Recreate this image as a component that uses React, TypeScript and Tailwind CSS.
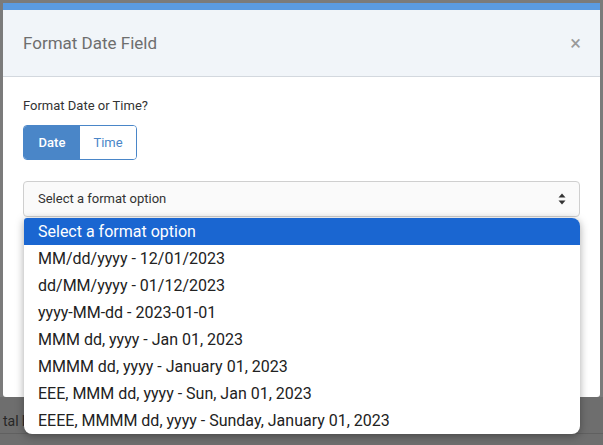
import React from 'react';

const options = [
  'Select a format option',
  'MM/dd/yyyy - 12/01/2023',
  'dd/MM/yyyy - 01/12/2023',
  'yyyy-MM-dd - 2023-01-01',
  'MMM dd, yyyy - Jan 01, 2023',
  'MMMM dd, yyyy - January 01, 2023',
  'EEE, MMM dd, yyyy - Sun, Jan 01, 2023',
  'EEEE, MMMM dd, yyyy - Sunday, January 01, 2023',
];

const SortIcon = () => (
  <svg width="8" height="12" viewBox="0 0 8 12" className="text-[#333]">
    <path d="M4 0.5 L7.5 4.5 H0.5 Z" fill="currentColor" />
    <path d="M4 11.5 L7.5 7.5 H0.5 Z" fill="currentColor" />
  </svg>
);

export default function App() {
  return (
    <div className="relative h-[445px] w-[603px] overflow-hidden bg-[#7b7b7b] font-['Roboto',sans-serif]">
      <div className="mx-[3px] mt-[3px] h-[394px] overflow-hidden rounded-b-[3px] bg-white">
        <div className="h-[7px] bg-[#5b9be1]" />
        <div className="flex h-[67px] items-center justify-between border-b border-[#d3d8de] bg-[#f1f5f9] pl-[20px] pr-[19px]">
          <h2 className="pt-[1px] text-[17px] text-[#6e6e6e]">Format Date Field</h2>
          <span className="text-[20px] leading-none text-[#9a9a9a]">×</span>
        </div>
        <div className="px-[20px] pt-[20px]">
          <div className="text-[13px] leading-[18px] text-[#333]">Format Date or Time?</div>
          <div className="mt-[10px] flex h-[35px] w-[114px] overflow-hidden rounded-[4px] border border-[#4a86c8] text-[13px]">
            <div className="flex w-[56px] items-center justify-center bg-[#4a86c8] font-medium text-white">Date</div>
            <div className="flex flex-1 items-center justify-center bg-white text-[#4a86c8]">Time</div>
          </div>
          <div className="mt-[21px] flex h-[36px] items-center justify-between rounded-[4px] border border-[#cfcfcf] bg-[#fafafa] pl-[14px] pr-[13px] text-[13px] text-[#333]">
            <span>Select a format option</span>
            <SortIcon />
          </div>
        </div>
      </div>
      <div className="relative h-[48px] bg-[#6e6e6e]">
        <div className="absolute left-[390px] top-0 h-[36px] w-px bg-[#5f5f5f]" />
        <div className="absolute left-0 right-0 top-[36px] h-px bg-[#606060]" />
        <span className="absolute left-[3px] top-[14px] text-[14px] text-[#262626]">tal b</span>
      </div>
      <ul className="absolute left-[24px] top-[218px] w-[556px] overflow-hidden rounded-b-[8px] rounded-tl-[3px] rounded-tr-[8px] bg-white shadow-[0_2px_8px_rgba(0,0,0,0.35)]">
        {options.map((opt, i) => (
          <li
            key={opt}
            className={
              i === 0
                ? 'flex h-[27px] items-center bg-[#1a66d1] pl-[14px] text-[16px] text-white'
                : 'flex h-[27px] items-center pl-[14px] text-[16px] text-[#222]'
            }
          >
            {opt}
          </li>
        ))}
      </ul>
    </div>
  );
}
